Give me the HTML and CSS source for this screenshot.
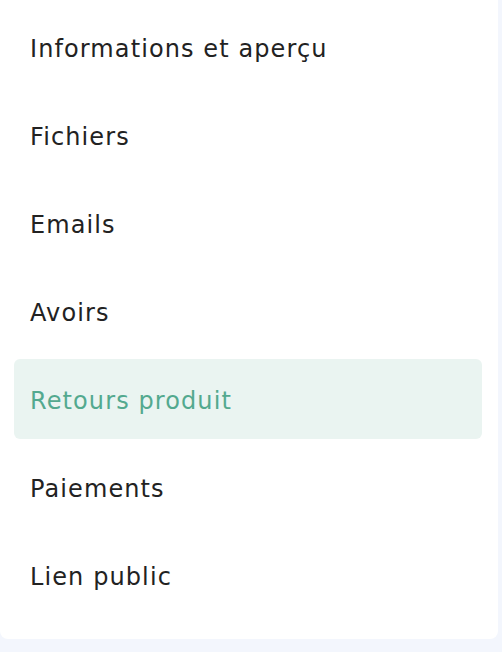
FILE: index.html
```html
<!DOCTYPE html>
<html lang="fr">
<head>
    <meta charset="UTF-8">
    <meta name="viewport" content="width=device-width, initial-scale=1.0">
    <title>Commande</title>
    <link rel="stylesheet" href="styles.css">
</head>
<body>
    <nav class="side-card">
        <a class="nav-item" href="#">Informations et aperçu</a>
        <a class="nav-item" href="#">Fichiers</a>
        <a class="nav-item" href="#">Emails</a>
        <a class="nav-item" href="#">Avoirs</a>
        <a class="nav-item active" href="#">Retours produit</a>
        <a class="nav-item" href="#">Paiements</a>
        <a class="nav-item" href="#">Lien public</a>
    </nav>
</body>
</html>
```
FILE: styles.css
```css
html, body {
    margin: 0;
    padding: 0;
}

body {
    font-family: 'DejaVu Sans', sans-serif;
    background-color: #f3f6fd;
    height: 652px;
}

.side-card {
    width: 498px;
    box-sizing: border-box;
    background-color: #ffffff;
    border-radius: 0 0 8px 8px;
    padding: 7px 16px 24px 14px;
    display: flex;
    flex-direction: column;
    gap: 8px;
}

.nav-item {
    display: flex;
    align-items: center;
    box-sizing: border-box;
    height: 80px;
    padding: 3px 16px 0;
    border-radius: 6px;
    color: #222222;
    font-size: 24px;
    text-decoration: none;
    letter-spacing: 1.1px;
}

.nav-item.active {
    background-color: #eaf4f1;
    color: #53a98f;
}
```
